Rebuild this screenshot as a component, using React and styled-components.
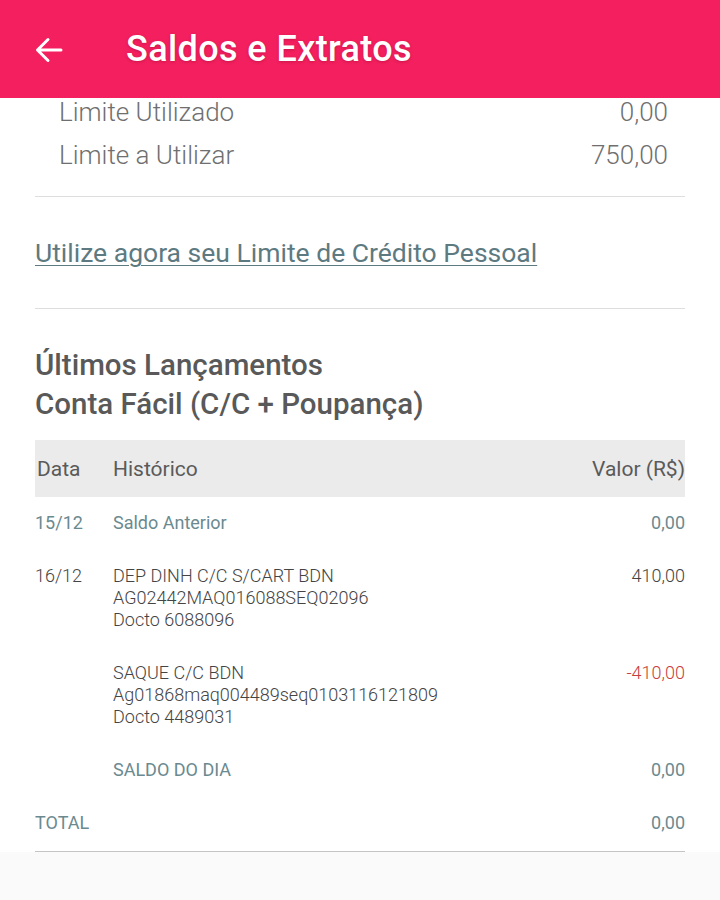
import React from 'react';
import styled, { createGlobalStyle } from 'styled-components';

const GlobalStyle = createGlobalStyle`
  html, body {
    margin: 0;
    padding: 0;
    background: #ffffff;
    font-family: Roboto, "Liberation Sans", Arial, sans-serif;
  }
`;

const entries = [
  { date: '15/12', lines: ['Saldo Anterior'], value: '0,00', tone: 'teal' },
  {
    date: '16/12',
    lines: ['DEP DINH C/C S/CART BDN', 'AG02442MAQ016088SEQ02096', 'Docto 6088096'],
    value: '410,00',
    tone: 'dark',
  },
  {
    date: '',
    lines: ['SAQUE C/C BDN', 'Ag01868maq004489seq0103116121809', 'Docto 4489031'],
    value: '-410,00',
    tone: 'dark',
    negative: true,
  },
  { date: '', lines: ['SALDO DO DIA'], value: '0,00', tone: 'teal' },
  { date: 'TOTAL', lines: [''], value: '0,00', tone: 'teal', total: true },
];

const ArrowIcon = () => (
  <svg width="28" height="26" viewBox="0 0 28 26" fill="none">
    <path
      d="M26 13H3M13 2.5L2.5 13L13 23.5"
      stroke="#ffffff"
      strokeWidth="3"
      strokeLinecap="round"
      strokeLinejoin="round"
    />
  </svg>
);

const App = () => {
  return (
    <Page>
      <GlobalStyle />
      <TopBar>
        <BackButton>
          <ArrowIcon />
        </BackButton>
        <Title>Saldos e Extratos</Title>
      </TopBar>

      <Content>
        {/* limites */}
        <LimitBlock>
          <LimitRow>
            <span>Limite Utilizado</span>
            <span>0,00</span>
          </LimitRow>
          <LimitRow>
            <span>Limite a Utilizar</span>
            <span>750,00</span>
          </LimitRow>
        </LimitBlock>

        <Divider />

        <LinkBlock>
          <CreditLink href="#">Utilize agora seu Limite de Crédito Pessoal</CreditLink>
        </LinkBlock>

        <Divider />

        <SectionTitle>
          Últimos Lançamentos
          <br />
          Conta Fácil (C/C + Poupança)
        </SectionTitle>

        <TableHead>
          <HeadCell>Data</HeadCell>
          <HeadCell>Histórico</HeadCell>
          <HeadCell $right>Valor (R$)</HeadCell>
        </TableHead>

        {entries.map((row, i) => (
          <EntryRow key={i} $last={row.total}>
            <DateCell $tone={row.tone}>{row.date}</DateCell>
            <HistoryCell $tone={row.tone}>
              {row.lines.map((l, j) => (
                <div key={j}>{l || '\u00a0'}</div>
              ))}
            </HistoryCell>
            <ValueCell $tone={row.tone} $negative={row.negative}>
              {row.value}
            </ValueCell>
          </EntryRow>
        ))}

        <Divider $strong />
      </Content>

      <Footer />
    </Page>
  );
};

const Page = styled.div`
  width: 720px;
  min-height: 900px;
  background: #ffffff;
  display: flex;
  flex-direction: column;
`;

const TopBar = styled.header`
  height: 98px;
  background-color: #f41f5e;
  display: flex;
  align-items: center;
  padding-left: 35px;
  gap: 63px;
  box-sizing: border-box;
`;

const BackButton = styled.button`
  background: none;
  border: none;
  padding: 0;
  display: flex;
  align-items: center;
  cursor: pointer;
  margin-top: 2px;
`;

const Title = styled.h1`
  margin: 0;
  color: #ffffff;
  font-size: 36px;
  font-weight: 500;
  letter-spacing: 0.4px;
  text-shadow: 0 1px 3px rgba(120, 0, 40, 0.35);
`;

const Content = styled.main`
  padding: 0 35px;
`;

const LimitBlock = styled.div`
  padding: 0 17px 27px 24px;
`;

const LimitRow = styled.div`
  display: flex;
  justify-content: space-between;
  align-items: center;
  height: 28px;
  font-size: 26px;
  font-weight: 300;
  color: #6f6f6f;

  & + & {
    margin-top: 15px;
  }
`;

const Divider = styled.hr`
  margin: 0;
  border: none;
  border-top: 1px solid ${props => (props.$strong ? '#c4c4c4' : '#dedede')};
`;

const LinkBlock = styled.div`
  padding: 41px 0 40px;
  height: 30px;
  line-height: 30px;
`;

const CreditLink = styled.a`
  color: #5e7a81;
  font-size: 26.5px;
  font-weight: 400;
  text-decoration: underline;
  text-underline-offset: 3px;
  text-decoration-thickness: 1px;
`;

const SectionTitle = styled.h2`
  margin: 0;
  padding: 37px 0 16px;
  font-size: 29.5px;
  font-weight: 500;
  line-height: 39px;
  color: #595959;
`;

const TableHead = styled.div`
  display: grid;
  grid-template-columns: 78px 1fr auto;
  align-items: center;
  height: 57px;
  background: #ebebeb;
`;

const HeadCell = styled.div`
  font-size: 21px;
  font-weight: 400;
  color: #5a5a5a;
  padding-left: ${props => (props.$right ? '0' : '2px')};
  text-align: ${props => (props.$right ? 'right' : 'left')};
  &:nth-child(2) {
    padding-left: 0;
  }
`;

const toneColor = tone => (tone === 'teal' ? '#6b8a90' : '#444444');

const EntryRow = styled.div`
  display: grid;
  grid-template-columns: 78px 1fr auto;
  align-items: start;
  padding: 15px 0 ${props => (props.$last ? '17px' : '16px')};
  font-size: 18px;
  font-weight: 300;
  line-height: 22px;
`;

const DateCell = styled.div`
  color: ${props => toneColor(props.$tone)};
  font-weight: ${props => (props.$tone === 'teal' ? 400 : 300)};
`;

const HistoryCell = styled.div`
  color: ${props => toneColor(props.$tone)};
  font-weight: ${props => (props.$tone === 'teal' ? 400 : 300)};
`;

const ValueCell = styled.div`
  text-align: right;
  color: ${props => (props.$negative ? '#c8403d' : toneColor(props.$tone))};
  font-weight: ${props => (props.$tone === 'teal' ? 400 : 300)};
`;

const Footer = styled.div`
  flex: 1;
  min-height: 47px;
  background: #fafafa;
`;

export default App;
